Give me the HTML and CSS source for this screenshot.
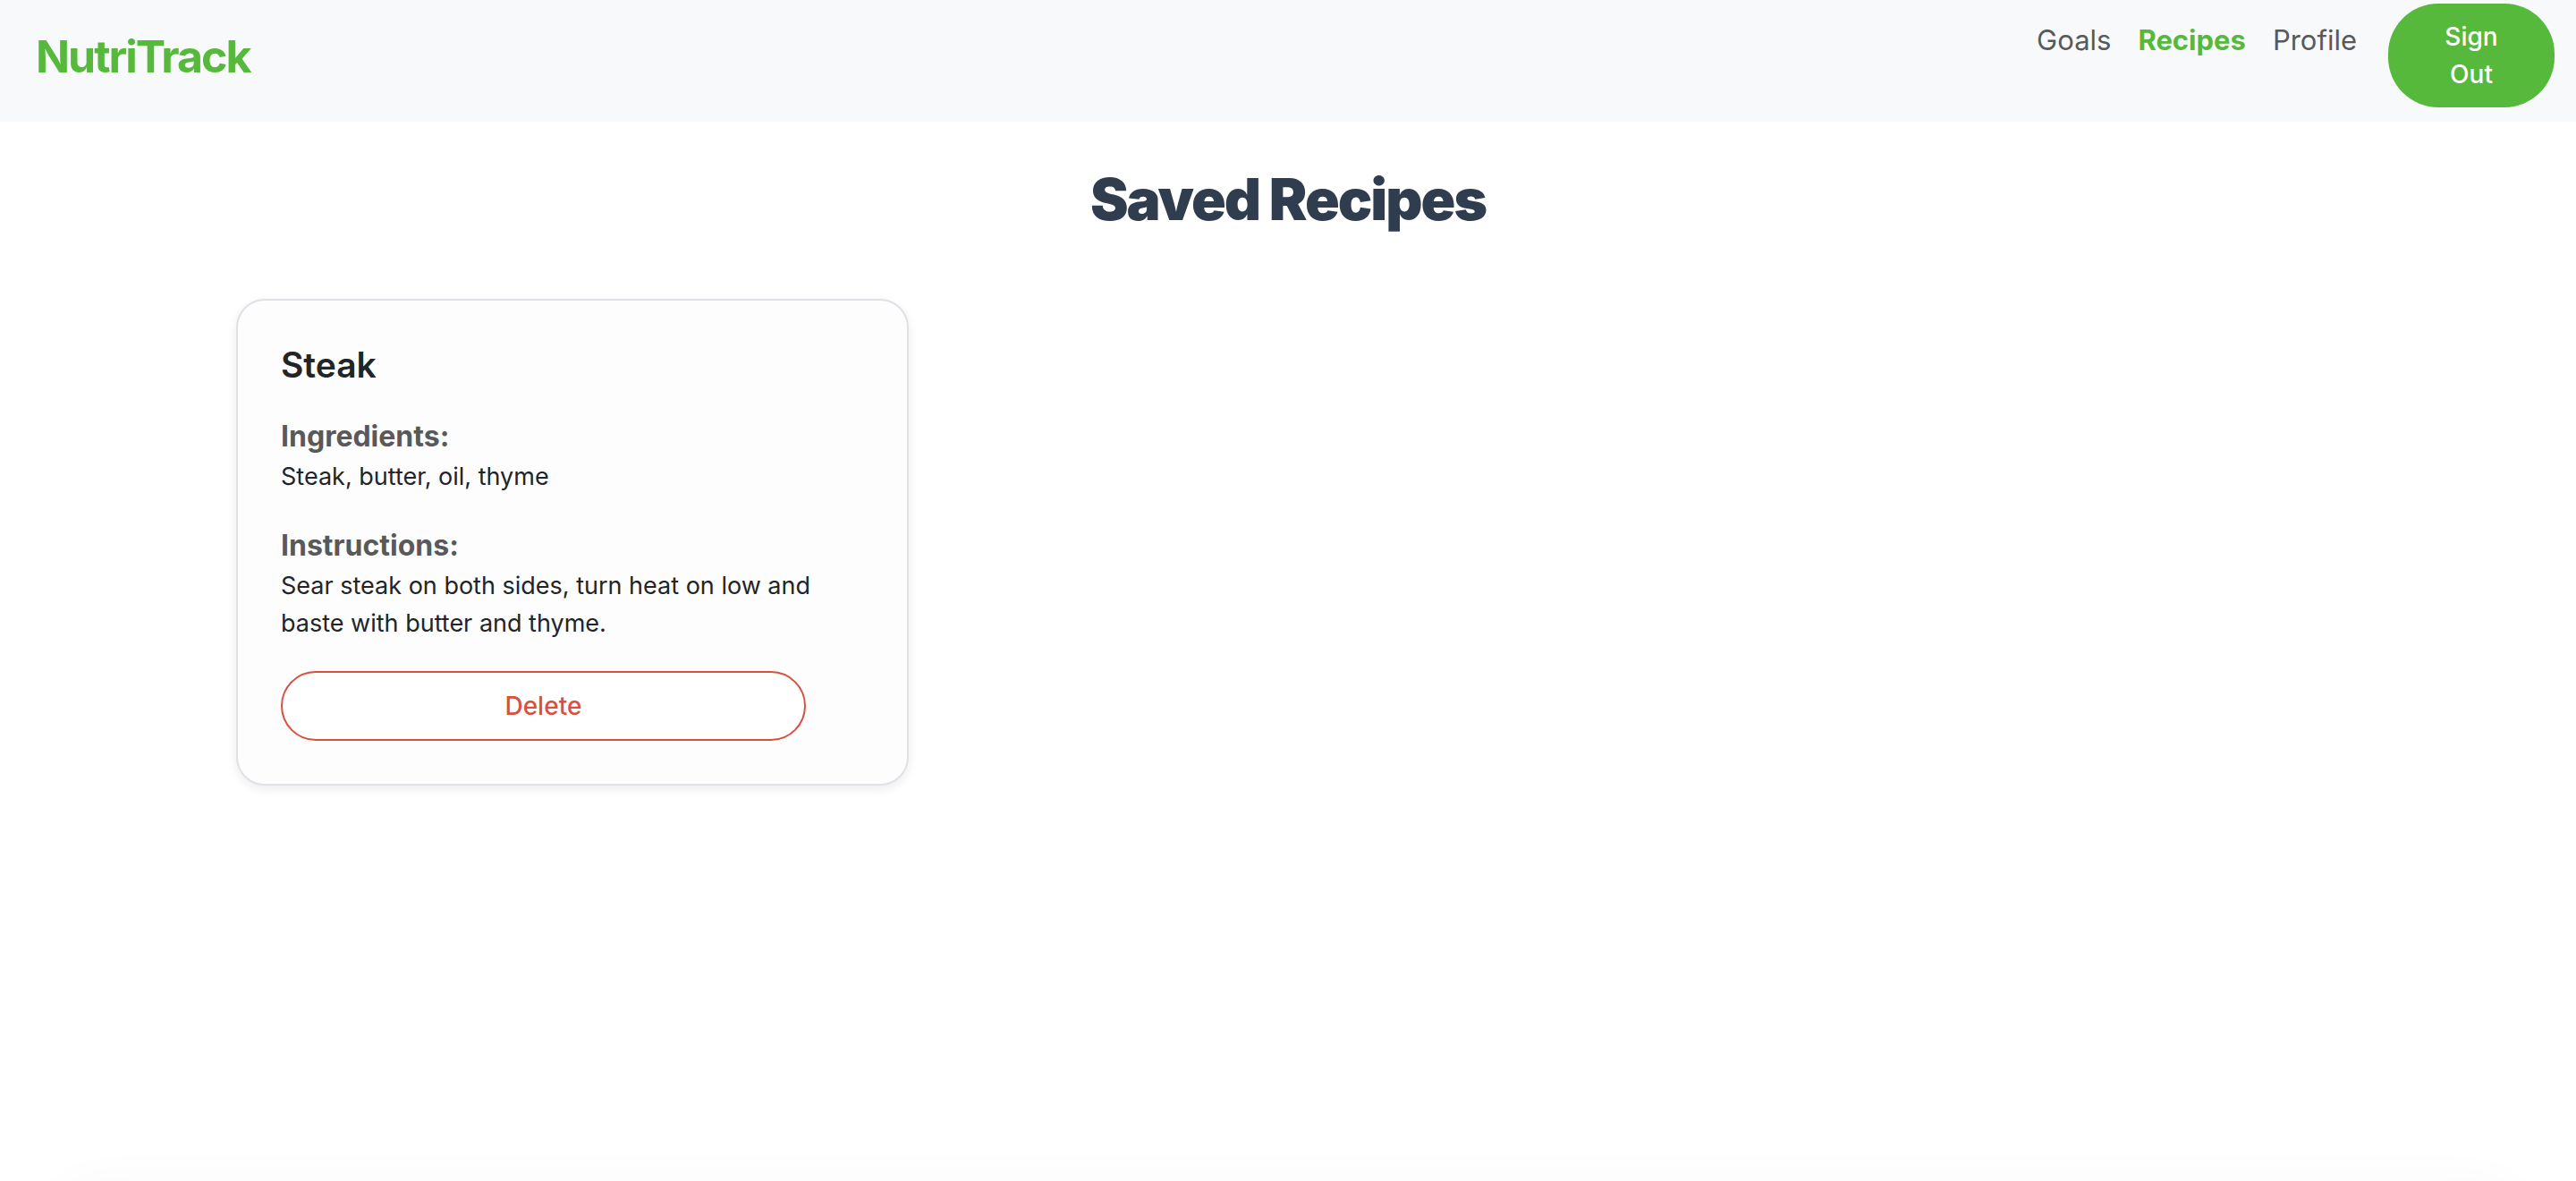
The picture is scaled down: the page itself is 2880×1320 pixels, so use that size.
FILE: index.html
```html
<!DOCTYPE html>
<html lang="en">
<head>
  <meta charset="utf-8">
  <meta name="viewport" content="width=device-width, initial-scale=1">
  <title>NutriTrack - Saved Recipes</title>
  <link rel="stylesheet" href="styles.css">
</head>
<body>
  <header class="navbar">
    <a class="brand" href="#">NutriTrack</a>
    <nav class="nav-links">
      <a class="nav-link" href="#">Goals</a>
      <a class="nav-link active" href="#">Recipes</a>
      <a class="nav-link" href="#">Profile</a>
      <button class="sign-out" type="button">Sign Out</button>
    </nav>
  </header>

  <main class="container">
    <h1 class="page-title">Saved Recipes</h1>
    <div class="recipe-grid">
      <article class="recipe-card">
        <h2 class="recipe-name">Steak</h2>
        <section class="recipe-section">
          <h3 class="section-label">Ingredients:</h3>
          <p class="section-text">Steak, butter, oil, thyme</p>
        </section>
        <section class="recipe-section">
          <h3 class="section-label">Instructions:</h3>
          <p class="section-text">Sear steak on both sides, turn heat on low and baste with butter and thyme.</p>
        </section>
        <button class="delete" type="button">Delete</button>
      </article>
    </div>
  </main>

  <footer class="page-edge"></footer>
</body>
</html>
```
FILE: styles.css
```css
* {
  box-sizing: border-box;
}

body {
  display: flex;
  flex-direction: column;
  min-height: 100vh;
  margin: 0;
  background: #fff;
  color: #212529;
  font-family: Inter, "Liberation Sans", sans-serif;
  font-size: 28px;
  line-height: 42px;
}

h1, h2, h3, p {
  margin: 0;
}

button {
  font: inherit;
  font-weight: 500;
  cursor: pointer;
}

.navbar {
  display: flex;
  justify-content: space-between;
  align-items: flex-start;
  padding: 4px 24px 16px 40px;
  background: #f8f9fb;
}

.brand {
  margin-top: 20px;
  color: #56b93c;
  font-size: 50px;
  font-weight: 700;
  line-height: 78px;
  letter-spacing: -2px;
  text-decoration: none;
}

.nav-links {
  display: flex;
  align-items: flex-start;
}

.nav-link {
  padding: 16px 15px;
  color: #58595b;
  font-size: 31px;
  line-height: 50px;
  text-decoration: none;
}

.nav-link.active {
  color: #56b93c;
  font-weight: 700;
}

.sign-out {
  width: 186px;
  margin-left: 20px;
  padding: 16px 56px;
  border: 0;
  border-radius: 56px;
  background: #56b93c;
  color: #fff;
}

.container {
  flex: 1;
  width: 100%;
  max-width: 2400px;
  margin: 0 auto;
  padding: 48px 24px;
}

.page-title {
  color: #2f3d4f;
  font-size: 64px;
  font-weight: 900;
  line-height: 78px;
  letter-spacing: -2px;
  text-align: center;
}

.recipe-grid {
  display: grid;
  grid-template-columns: repeat(3, 1fr);
  gap: 48px;
  margin-top: 72px;
}

.recipe-card {
  padding: 48px;
  border: 2px solid #dee2e6;
  border-radius: 32px;
  background: #fdfdfd;
  box-shadow: 0 4px 12px rgba(0, 0, 0, 0.08);
}

.recipe-name {
  font-size: 39px;
  font-weight: 600;
  line-height: 48px;
}

.recipe-section {
  margin-top: 32px;
}

.section-label {
  color: #58595b;
  font-size: 32px;
  font-weight: 700;
  line-height: 48px;
}

.section-text {
  font-size: 27px;
}

.delete {
  display: block;
  width: 90%;
  margin-top: 32px;
  padding: 16px;
  border: 2px solid #d9513e;
  border-radius: 40px;
  background: #fff;
  color: #d9513e;
}

/* Soft shade along the bottom edge of the page */
.page-edge {
  position: relative;
  height: 48px;
  overflow: hidden;
}

.page-edge::after {
  content: "";
  position: absolute;
  top: 100%;
  left: 64px;
  right: 64px;
  height: 96px;
  border-radius: 64px;
  box-shadow: 0 10px 64px rgba(0, 0, 0, 0.04);
}
```
